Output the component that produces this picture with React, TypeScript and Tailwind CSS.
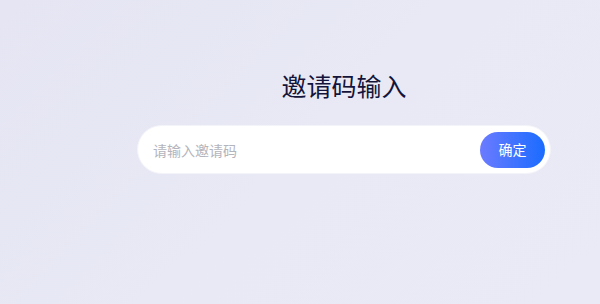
import { useState } from 'react'

export default function App() {
  const [code, setCode] = useState('')

  return (
    <div
      className="h-[304px] w-full overflow-hidden bg-[linear-gradient(135deg,#e5e5f3,#e8e9f5_50%,#eaeaf6)]"
      style={{ fontFamily: '"Noto Sans CJK SC", "Noto Sans", sans-serif' }}
    >
      <div className="ml-[137px] flex w-[414px] flex-col items-center pt-[67px]">
        <h1 className="text-[25px] leading-[37px] font-normal text-[#14143a]">邀请码输入</h1>

        <div className="mt-[21px] flex h-[49px] w-full items-center rounded-full border border-[#f3f3fa] bg-white pr-[5px] pl-[15px]">
          <input
            value={code}
            onChange={(e) => setCode(e.target.value)}
            placeholder="请输入邀请码"
            className="h-full min-w-0 flex-1 bg-transparent text-[14px] text-[#333] outline-none placeholder:text-[#b4b4bc]"
          />
          <button className="h-[36px] w-[65px] rounded-full bg-[linear-gradient(90deg,#6b7bff,#1a6cff)] text-[14px] text-white">
            确定
          </button>
        </div>
      </div>
    </div>
  )
}
